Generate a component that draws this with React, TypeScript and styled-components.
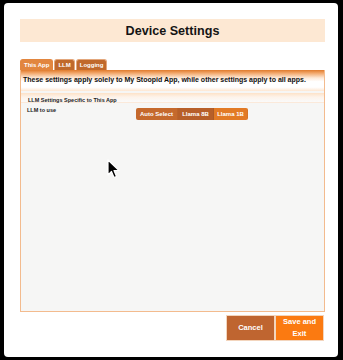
import React, { useState } from "react";
import styled, { createGlobalStyle } from "styled-components";

const GlobalStyle = createGlobalStyle`
	html, body {
		margin: 0;
		padding: 0;
		background: #000;
		font-family: "Liberation Sans", Arial, sans-serif;
	}
`;

const Screen = styled.div`
	width: 343px;
	height: 360px;
	padding: 3px 5px 3px 4px;
	box-sizing: border-box;
	background: #000;
	position: relative;
`;

const Dialog = styled.div`
	height: 354px;
	background: #fff;
	border-radius: 4px;
	box-sizing: border-box;
	padding: 16px 13px 0 16px;
	display: flex;
	flex-direction: column;
`;

const TitleBar = styled.div`
	height: 23px;
	background: #fde8d3;
	display: flex;
	align-items: center;
	justify-content: center;
	font-weight: bold;
	font-size: 12.6px;
	color: #141414;
`;

const Tabs = styled.div`
	display: flex;
	gap: 1px;
	margin-top: 17px;
	height: 11px;
`;

const Tab = styled.div<{ $active?: boolean }>`
	padding: 0 3px;
	display: flex;
	align-items: center;
	font-size: 6px;
	font-weight: bold;
	color: #fff;
	border-radius: 3px 3px 0 0;
	background: ${p => (p.$active ? "#e2863f" : "#c0692c")};
	border: 1px solid ${p => (p.$active ? "#e2863f" : "#e3a77c")};
	border-bottom: none;
	box-sizing: border-box;
`;

const Panel = styled.div`
	height: 242px;
	border: 1px solid #f3bb8e;
	border-top: none;
	background: #f6f6f5;
	box-sizing: border-box;
	display: flex;
	flex-direction: column;
`;

const Banner = styled.div`
	height: 21px;
	padding: 6px 2px 0;
	box-sizing: border-box;
	font-size: 7px;
	font-weight: bold;
	color: #111;
	white-space: nowrap;
	background: linear-gradient(to bottom, #e07a2c 0%, #f2a86c 15%, #fde9d8 38%, #fff 55%, #fff 82%, #fde6d1 100%);
`;

const SectionHeader = styled.div`
	margin-top: 2px;
	height: 10px;
	padding: 4px 7px 0;
	box-sizing: border-box;
	font-size: 5.5px;
	font-weight: bold;
	color: #222;
	background: linear-gradient(to bottom, #fde2c8 0%, #fdf3ea 45%, #fafafa 100%);
	border-bottom: 1px solid #fbe9da;
`;

const SettingRow = styled.div`
	display: flex;
	align-items: flex-start;
	padding: 4px 6px;
	gap: 85px;
`;

const Label = styled.div`
	font-size: 5.5px;
	font-weight: bold;
	color: #222;
	width: 24px;
	white-space: nowrap;
`;

const Segmented = styled.div`
	display: flex;
	margin-top: 1px;
	border-radius: 2px;
	overflow: hidden;
	height: 12px;
`;

const Segment = styled.div<{ $tone: string; $w: number }>`
	width: ${p => p.$w}px;
	display: flex;
	align-items: center;
	justify-content: center;
	font-size: 6px;
	font-weight: bold;
	color: #fff;
	background: ${p => p.$tone};
	border-right: 1px solid rgba(0, 0, 0, 0.05);
`;

const Footer = styled.div`
	display: flex;
	justify-content: flex-end;
	margin-top: 3px;
	padding-right: 1px;
`;

const FooterButton = styled.button<{ $primary?: boolean }>`
	width: 49px;
	height: 26px;
	border: 1px solid #f3d5bd;
	padding: 0 4px;
	font-family: inherit;
	font-size: 7.5px;
	font-weight: bold;
	line-height: 12px;
	color: #fff;
	background: ${p => (p.$primary ? "#fb7a11" : "#bf6530")};
`;

const Cursor = styled.svg`
	position: absolute;
	left: 107px;
	top: 159px;
`;

const options = [
	{ name: "Auto Select", tone: "#c5692d", w: 41 },
	{ name: "Llama 8B", tone: "#b75f29", w: 35 },
	{ name: "Llama 1B", tone: "#e27a25", w: 33 },
];

export default function App() {
	const [tab, setTab] = useState("This App");

	return (
		<>
			<GlobalStyle />
			<Screen>
				<Dialog>
					<TitleBar>Device Settings</TitleBar>
					<Tabs>
						{["This App", "LLM", "Logging"].map(t => (
							<Tab key={t} $active={t === tab} onClick={() => setTab(t)}>{t}</Tab>
						))}
					</Tabs>
					<Panel>
						<Banner>These settings apply solely to My Stoopid App, while other settings apply to all apps.</Banner>
						<SectionHeader>LLM Settings Specific to This App</SectionHeader>
						<SettingRow>
							<Label>LLM to use</Label>
							<Segmented>
								{options.map(o => (
									<Segment key={o.name} $tone={o.tone} $w={o.w}>{o.name}</Segment>
								))}
							</Segmented>
						</SettingRow>
					</Panel>
					<Footer>
						<FooterButton>Cancel</FooterButton>
						<FooterButton $primary>Save and Exit</FooterButton>
					</Footer>
				</Dialog>
				<Cursor width="13" height="20" viewBox="0 0 13 20">
					<path d="M1 1 L1 16 L4.5 12.5 L7 18.5 L9.5 17.5 L7 11.5 L12 11.5 Z" fill="#000" stroke="#fff" strokeWidth="1.2" strokeLinejoin="round" />
				</Cursor>
			</Screen>
		</>
	);
}
